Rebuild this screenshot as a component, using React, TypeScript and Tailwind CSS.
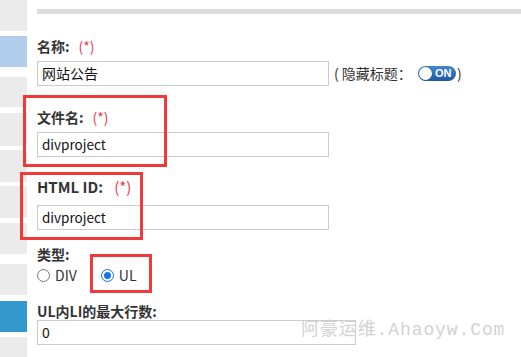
import React from "react";

const font = { fontFamily: '"Noto Sans CJK SC", "Liberation Sans", sans-serif' };

function Req({ ml }: { ml: string }) {
  return <span className={`${ml} font-normal text-[#e8394a]`}>(*)</span>;
}

function Field({ value, w, size }: { value: string; w: string; size: string }) {
  return (
    <div
      className={`${w} ${size} h-[25px] border border-[#cccccc] bg-white pl-[4px] flex items-center text-[#111]`}
    >
      {value}
    </div>
  );
}

export default function App() {
  const side: [string, string, string][] = [
    ["h-[31px]", "mt-0", "bg-[#ebebeb]"],
    ["h-[32px]", "mt-[5px]", "bg-[#b1cdeb]"],
    ["h-[31px]", "mt-[10px]", "bg-[#ebebeb]"],
    ["h-[33px]", "mt-[6px]", "bg-[#ebebeb]"],
    ["h-[33px]", "mt-[4px]", "bg-[#ebebeb]"],
    ["h-[32px]", "mt-[4px]", "bg-[#ebebeb]"],
    ["h-[32px]", "mt-[5px]", "bg-[#ebebeb]"],
    ["h-[31px]", "mt-[10px]", "bg-[#ebebeb]"],
    ["h-[32px]", "mt-[6px]", "bg-[#3398cc]"],
    ["h-[20px]", "mt-[5px]", "bg-[#ebebeb]"],
  ];
  return (
    <div
      className="relative w-[521px] h-[357px] overflow-hidden bg-white flex text-[#333]"
      style={font}
    >
      <div className="w-[27px] shrink-0 flex flex-col">
        {side.map(([h, m, c], i) => (
          <div key={i} className={`${h} ${m} ${c}`} />
        ))}
      </div>
      <div className="flex-1 pl-[10px] flex flex-col">
        <div className="mt-[9px] h-[5px] bg-[#dddddd]" />
        <div className="mt-[22px] h-[20px] leading-[20px] text-[14px] font-bold">
          名称:<Req ml="ml-[9px]" />
        </div>
        <div className="mt-[5px] flex items-center text-[14px]">
          <Field value="网站公告" w="w-[292px]" size="text-[14px]" />
          <span className="ml-[5px]">( 隐藏标题：</span>
          <div className="ml-[6px] w-[38px] h-[15px] rounded-full bg-gradient-to-b from-[#3f86d2] to-[#1f5aa6] flex items-center pl-[1px]">
            <div className="w-[13px] h-[13px] rounded-full bg-white shadow-[0_0_1px_rgba(0,0,0,0.4)]" />
            <span
              className="ml-[3px] text-[11px] font-bold text-white leading-none"
              style={{ fontFamily: '"Liberation Sans", sans-serif' }}
            >
              ON
            </span>
          </div>
          <span className="ml-[1px]">)</span>
        </div>
        <div className="mt-[21px] h-[20px] leading-[20px] text-[14px] font-bold">
          文件名:<Req ml="ml-[9px]" />
        </div>
        <div className="mt-[5px]">
          <Field value="divproject" w="w-[292px]" size="text-[13.5px]" />
        </div>
        <div className="mt-[20px] h-[20px] leading-[20px] text-[15px] font-bold">
          HTML ID:<Req ml="ml-[11px]" />
        </div>
        <div className="mt-[8px]">
          <Field value="divproject" w="w-[292px]" size="text-[13.5px]" />
        </div>
        <div className="mt-[14px] h-[20px] leading-[20px] text-[14px] font-bold">类型:</div>
        <div className="mt-[1px] h-[20px] flex items-center text-[14px]">
          <span className="w-[13px] h-[13px] rounded-full border border-[#777] bg-white" />
          <span className="ml-[5px]">DIV</span>
          <span className="ml-[24px] w-[13px] h-[13px] rounded-full border border-[#1a73e8] bg-white flex items-center justify-center">
            <span className="w-[7px] h-[7px] rounded-full bg-[#1a73e8]" />
          </span>
          <span className="ml-[5px]">UL</span>
        </div>
        <div className="mt-[17px] h-[18px] leading-[18px] text-[14px] font-bold">UL内LI的最大行数:</div>
        <div className="mt-0">
          <Field value="0" w="w-[319px]" size="text-[14px]" />
        </div>
      </div>

      <div className="absolute left-[23px] top-[95px] w-[144px] h-[72px] border-[3px] border-[#f03a3a]" />
      <div className="absolute left-[20px] top-[172px] w-[123px] h-[68px] border-[3px] border-[#f03a3a]" />
      <div className="absolute left-[90px] top-[254px] w-[62px] h-[39px] border-[3px] border-[#f03a3a]" />

      <div
        className="absolute left-[301px] top-[319px] text-[18px] leading-[22px] text-[#d2d2d2] tracking-[0.9px] whitespace-nowrap"
        style={{ fontFamily: '"Liberation Mono", "Noto Sans CJK SC", monospace' }}
      >
        阿豪运维.Ahaoyw.Com
      </div>
    </div>
  );
}
